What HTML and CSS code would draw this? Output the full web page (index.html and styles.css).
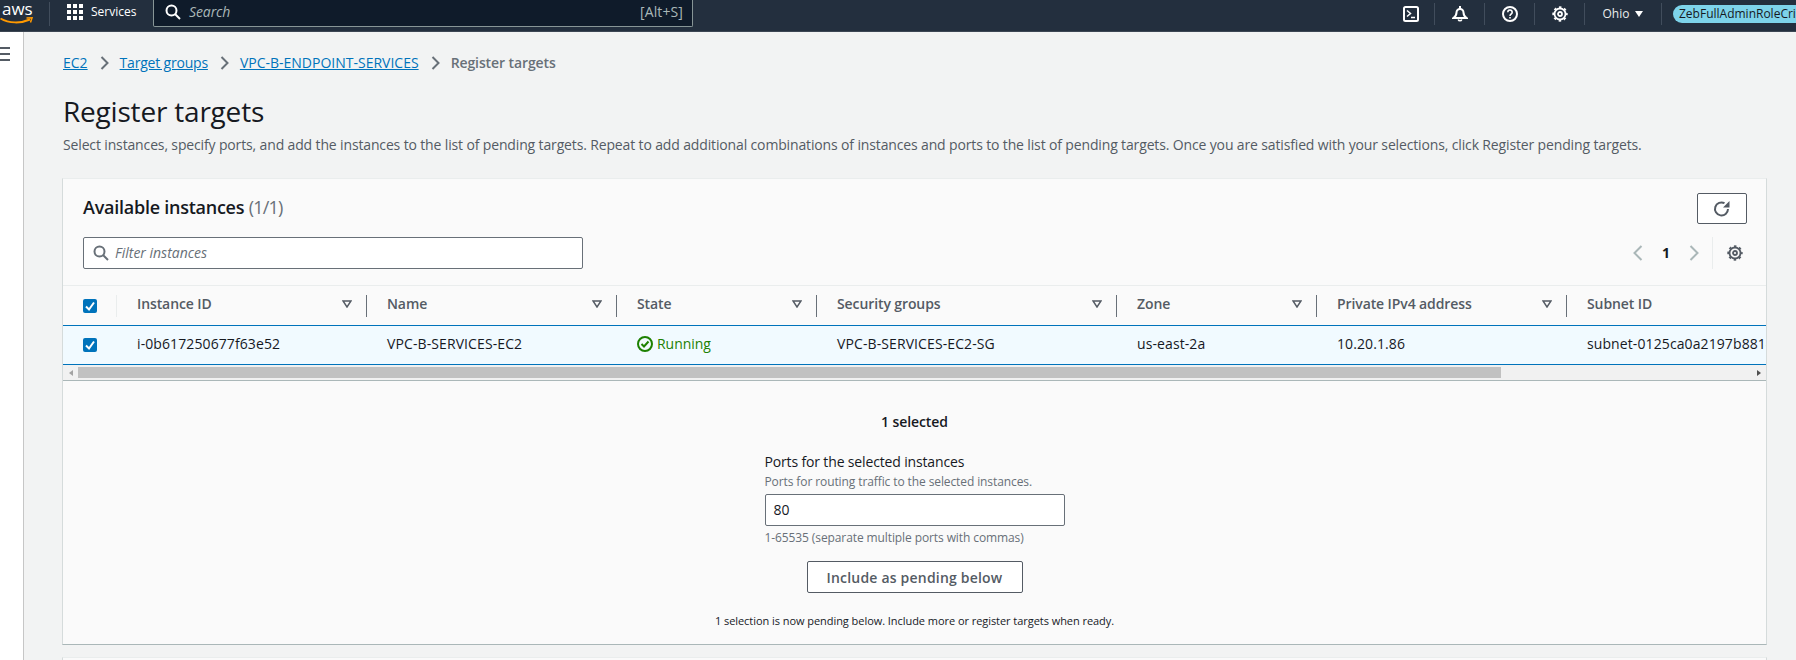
FILE: index.html
```html
<!DOCTYPE html>
<html lang="en">
<head>
    <meta charset="UTF-8">
    <title>Register targets</title>
    <link rel="stylesheet" href="styles.css">
</head>
<body>
    <header class="topnav">
        <div class="logo">
            <span class="logo-text">aws</span>
            <svg class="logo-smile" width="33" height="8" viewBox="0 0 33 8"><path d="M0.500 1.500C9 6.500 21 6.500 30 2.500" fill="none" stroke="#ff9900" stroke-width="2"/><path d="M26.500 1L32 0.800L30.500 5.500" fill="none" stroke="#ff9900" stroke-width="1.500"/></svg>
        </div>
        <div class="services">
            <svg width="16" height="16" viewBox="0 0 16 16" fill="#fff"><rect x="0" y="0" width="4" height="4"/><rect x="6" y="0" width="4" height="4"/><rect x="12" y="0" width="4" height="4"/><rect x="0" y="6" width="4" height="4"/><rect x="6" y="6" width="4" height="4"/><rect x="12" y="6" width="4" height="4"/><rect x="0" y="12" width="4" height="4"/><rect x="6" y="12" width="4" height="4"/><rect x="12" y="12" width="4" height="4"/></svg>
            <span>Services</span>
        </div>
        <div class="nav-search">
            <svg width="16" height="16" viewBox="0 0 16 16" fill="none" stroke="#fff" stroke-width="2"><circle cx="6.500" cy="6.500" r="5"/><path d="M10 10l5 5"/></svg>
            <span class="nav-search-text">Search</span>
            <span class="nav-search-key">[Alt+S]</span>
        </div>
        <div class="nav-right">
            <div class="nav-item nav-icon">
                <svg width="16" height="16" viewBox="0 0 16 16" fill="none" stroke="#fff" stroke-width="2"><rect x="1" y="1" width="14" height="14" rx="1.500"/><path d="M4 4.500L7.500 7.500L4 10.500M8 11.500h4" stroke-width="1.500"/></svg>
            </div>
            <div class="nav-item nav-icon">
                <svg width="16" height="16" viewBox="0 0 16 16" fill="none" stroke="#fff" stroke-width="2"><path d="M1.500 12c2-1.500 3-3 3-5.500a3.500 3.500 0 0 1 7 0c0 2.500 1 4 3 5.500z"/><path d="M8 0v3"/><path d="M6.200 13.500a1.900 1.900 0 0 0 3.600 0" stroke-width="1.600"/></svg>
            </div>
            <div class="nav-item nav-icon">
                <svg width="16" height="16" viewBox="0 0 16 16" fill="none" stroke="#fff" stroke-width="2"><circle cx="8" cy="8" r="7"/><path d="M5.800 6.200a2.200 2.200 0 1 1 3.400 1.800C8.400 8.500 8 9 8 10" stroke-width="1.600"/><path d="M8 11v1.500" stroke-width="1.600"/></svg>
            </div>
            <div class="nav-item nav-icon">
                <svg width="16" height="16" viewBox="0 0 16 16" fill="none" stroke="#fff" stroke-width="1.800"><circle cx="8" cy="8" r="5.500"/><circle cx="8" cy="8" r="6.800" stroke-dasharray="2.500 2.840" stroke-dashoffset="1.250"/><circle cx="8" cy="8" r="2"/></svg>
            </div>
            <div class="nav-item nav-region">
                <span>Ohio</span>
                <svg width="8" height="6" viewBox="0 0 8 6" fill="#fff"><path d="M0 0h8L4 6z"/></svg>
            </div>
            <div class="nav-role">
                <span class="role-pill">ZebFullAdminRoleCrissCrossApplesauce</span>
            </div>
        </div>
    </header>

    <div class="layout">
        <aside class="sidenav">
            <div class="burger"><i></i><i></i><i></i></div>
        </aside>
        <main class="content">
            <nav class="breadcrumbs">
                <a href="#">EC2</a>
                <svg class="crumb-arrow" width="10" height="16" viewBox="0 0 10 16"><path d="M1.500 2l6 6-6 6" fill="none" stroke="#687078" stroke-width="2"/></svg>
                <a href="#" class="crumb-tight">Target groups</a>
                <svg class="crumb-arrow" width="10" height="16" viewBox="0 0 10 16"><path d="M1.500 2l6 6-6 6" fill="none" stroke="#687078" stroke-width="2"/></svg>
                <a href="#">VPC-B-ENDPOINT-SERVICES</a>
                <svg class="crumb-arrow" width="10" height="16" viewBox="0 0 10 16"><path d="M1.500 2l6 6-6 6" fill="none" stroke="#687078" stroke-width="2"/></svg>
                <span class="crumb-current">Register targets</span>
            </nav>
            <h1>Register targets</h1>
            <p class="lead">Select instances, specify ports, and add the instances to the list of pending targets. Repeat to add additional combinations of instances and ports to the list of pending targets. Once you are satisfied with your selections, click Register pending targets.</p>

            <section class="card">
                <div class="card-head">
                    <div class="card-title-row">
                        <h2>Available instances <span class="count">(1/1)</span></h2>
                        <button class="btn-refresh" type="button">
                            <svg width="18" height="17" viewBox="0 0 18 17" fill="none" stroke="#545b64" stroke-width="2"><path d="M11.500 3.200A6.500 6.500 0 1 0 15 9"/><path d="M16.500 1v6.500H10z" fill="#545b64" stroke="none"/></svg>
                        </button>
                    </div>
                    <div class="tools-row">
                        <div class="filter">
                            <svg width="16" height="16" viewBox="0 0 16 16" fill="none" stroke="#687078" stroke-width="2"><circle cx="6.500" cy="6.500" r="5"/><path d="M10 10l5 5"/></svg>
                            <span>Filter instances</span>
                        </div>
                        <div class="pager">
                            <svg width="10" height="16" viewBox="0 0 10 16"><path d="M8.500 1l-7 7 7 7" fill="none" stroke="#aab7b8" stroke-width="2"/></svg>
                            <span class="page-num">1</span>
                            <svg width="10" height="16" viewBox="0 0 10 16"><path d="M1.500 1l7 7-7 7" fill="none" stroke="#aab7b8" stroke-width="2"/></svg>
                            <span class="pager-sep"></span>
                            <svg width="16" height="16" viewBox="0 0 16 16" fill="none" stroke="#545b64" stroke-width="1.800"><circle cx="8" cy="8" r="5.500"/><circle cx="8" cy="8" r="6.800" stroke-dasharray="2.500 2.840" stroke-dashoffset="1.250"/><circle cx="8" cy="8" r="2"/></svg>
                        </div>
                    </div>
                </div>

                <div class="table-wrap">
                    <div class="row row-head">
                        <div class="cell cell-check"><span class="check"><svg width="14" height="14" viewBox="0 0 14 14"><path d="M3 7.500l3 3 5-7" fill="none" stroke="#fff" stroke-width="2"/></svg></span></div>
                        <div class="cell cell-th">Instance ID<svg class="sort" width="10" height="8" viewBox="0 0 10 8"><path d="M1 1h8L5 7z" fill="none" stroke="#545b64" stroke-width="1.500"/></svg></div>
                        <div class="cell cell-th">Name<svg class="sort" width="10" height="8" viewBox="0 0 10 8"><path d="M1 1h8L5 7z" fill="none" stroke="#545b64" stroke-width="1.500"/></svg></div>
                        <div class="cell cell-th">State<svg class="sort" width="10" height="8" viewBox="0 0 10 8"><path d="M1 1h8L5 7z" fill="none" stroke="#545b64" stroke-width="1.500"/></svg></div>
                        <div class="cell cell-th">Security groups<svg class="sort" width="10" height="8" viewBox="0 0 10 8"><path d="M1 1h8L5 7z" fill="none" stroke="#545b64" stroke-width="1.500"/></svg></div>
                        <div class="cell cell-th">Zone<svg class="sort" width="10" height="8" viewBox="0 0 10 8"><path d="M1 1h8L5 7z" fill="none" stroke="#545b64" stroke-width="1.500"/></svg></div>
                        <div class="cell cell-th">Private IPv4 address<svg class="sort" width="10" height="8" viewBox="0 0 10 8"><path d="M1 1h8L5 7z" fill="none" stroke="#545b64" stroke-width="1.500"/></svg></div>
                        <div class="cell cell-th cell-last">Subnet ID</div>
                    </div>
                    <div class="row row-selected">
                        <div class="cell cell-check"><span class="check"><svg width="14" height="14" viewBox="0 0 14 14"><path d="M3 7.500l3 3 5-7" fill="none" stroke="#fff" stroke-width="2"/></svg></span></div>
                        <div class="cell">i-0b617250677f63e52</div>
                        <div class="cell">VPC-B-SERVICES-EC2</div>
                        <div class="cell cell-running">
                            <svg width="16" height="16" viewBox="0 0 16 16" fill="none" stroke="#1d8102" stroke-width="2"><circle cx="8" cy="8" r="7"/><path d="M4.500 8l2.500 2.500 4.500-5"/></svg>
                            Running
                        </div>
                        <div class="cell">VPC-B-SERVICES-EC2-SG</div>
                        <div class="cell">us-east-2a</div>
                        <div class="cell">10.20.1.86</div>
                        <div class="cell cell-last">subnet-0125ca0a2197b8814a</div>
                    </div>
                    <div class="hscroll">
                        <span class="hscroll-arrow hscroll-left"></span>
                        <div class="hscroll-track"><div class="hscroll-thumb"></div></div>
                        <span class="hscroll-arrow hscroll-right"></span>
                    </div>
                </div>

                <div class="ports">
                    <div class="selected-count">1 selected</div>
                    <div class="field">
                        <label>Ports for the selected instances</label>
                        <div class="field-desc">Ports for routing traffic to the selected instances.</div>
                        <div class="field-input">80</div>
                        <div class="field-hint">1-65535 (separate multiple ports with commas)</div>
                    </div>
                    <button class="btn-include" type="button">Include as pending below</button>
                    <div class="pending-note">1 selection is now pending below. Include more or register targets when ready.</div>
                </div>
            </section>

            <section class="card card-next"></section>
        </main>
    </div>
</body>
</html>
```

FILE: styles.css
```css
* {
    box-sizing: border-box;
}
html, body {
    height: 100%;
}
body {
    margin: 0;
    overflow: hidden;
    font-family: "Open Sans", "Noto Sans", sans-serif;
    font-size: 14px;
    line-height: 20px;
    color: #16191f;
    background-color: #f2f3f3;
}

/* top bar */
.topnav {
    display: flex;
    align-items: center;
    height: 32px;
    background-color: #232f3e;
    color: #fff;
    border-bottom: 1px solid #3c4653;
}
.logo {
    width: 50px;
    height: 24px;
    margin-bottom: 4px;
    border-right: 1px solid #414d5c;
    flex: none;
}
.logo-text {
    display: block;
    padding-left: 2px;
    font-size: 17px;
    line-height: 16px;
    margin-top: -1px;
}
.logo-smile {
    display: block;
}
.services {
    display: flex;
    align-items: center;
    gap: 8px;
    width: 103px;
    padding-left: 17px;
    font-size: 12px;
    flex: none;
    margin-bottom: 8px;
}
.nav-search {
    display: flex;
    align-items: center;
    width: 540px;
    height: 28px;
    margin-top: -6px;
    padding: 0 9px 0 11px;
    background-color: #0f1b2a;
    border: 1px solid #879596;
    border-top: none;
    border-radius: 0 0 2px 2px;
    flex: none;
}
.nav-search-text {
    margin-left: 8px;
    font-size: 14px;
    font-style: italic;
    color: #aab7b8;
    letter-spacing: -0.1px;
}
.nav-search-key {
    margin-left: auto;
    font-size: 14px;
    color: #aab7b8;
    letter-spacing: 0.1px;
}
.nav-right {
    display: flex;
    align-items: center;
    margin-left: auto;
    width: 393px;
    height: 24px;
    overflow: hidden;
    margin-bottom: 4px;
}
.nav-item {
    display: flex;
    align-items: center;
    justify-content: center;
    height: 22px;
    border-right: 1px solid #414d5c;
    flex: none;
}
.nav-icon {
    width: 50px;
}
.nav-icon:first-child {
    width: 32px;
    justify-content: flex-start;
}
.nav-region {
    gap: 6px;
    width: 77px;
    font-size: 12px;
    color: #eaeded;
}
.nav-role {
    padding-left: 11px;
    flex: none;
}
.role-pill {
    display: block;
    height: 18px;
    padding: 0 6px;
    border-radius: 9px;
    background-color: #7dd3ea;
    color: #16191f;
    font-size: 12px;
    line-height: 18px;
    white-space: nowrap;
}

/* page */
.layout {
    display: flex;
    height: 628px;
}
.sidenav {
    width: 24px;
    flex: none;
    background-color: #fff;
    border-right: 1px solid #c6c6c6;
    padding-top: 15px;
}
.burger {
    display: flex;
    flex-direction: column;
    gap: 4px;
    width: 10px;
}
.burger i {
    display: block;
    height: 2px;
    background-color: #545b64;
}
.content {
    flex: 1;
    min-width: 0;
    padding: 21px 29px 0 38px;
}
.breadcrumbs {
    display: flex;
    align-items: center;
    height: 20px;
    padding-left: 1px;
    font-size: 14px;
}
.breadcrumbs a {
    color: #0073bb;
}
.breadcrumbs .crumb-tight {
    letter-spacing: -0.2px;
}
.crumb-arrow {
    margin: 0 10px 0 12px;
}
.crumb-current {
    font-weight: 600;
    color: #687078;
    letter-spacing: -0.1px;
}
h1 {
    margin: 20px 0 0 1px;
    font-size: 28px;
    line-height: 36px;
    font-weight: 400;
    letter-spacing: -0.2px;
}
.lead {
    margin: 6px 0 0 1px;
    font-size: 14px;
    line-height: 20px;
    color: #545b64;
    white-space: nowrap;
    letter-spacing: -0.142px;
}

/* card */
.card {
    margin-top: 23px;
    background-color: #fafafa;
    border-left: 1px solid #d5dbdb;
    border-right: 1px solid #d5dbdb;
    border-bottom: 1px solid #aab7b8;
    border-top: 1px solid #eaeded;
}
.card-next {
    margin-top: 12px;
    height: 3px;
    border-bottom: none;
}
.card-head {
    height: 107px;
    padding: 14px 19px 0 20px;
    border-bottom: 1px solid #eaeded;
}
.card-title-row {
    display: flex;
    align-items: center;
    justify-content: space-between;
    height: 31px;
}
h2 {
    margin: -4px 0 0;
    font-size: 18px;
    line-height: 24px;
    font-weight: 600;
    letter-spacing: -0.25px;
}
.count {
    font-weight: 400;
    color: #687078;
    letter-spacing: -0.8px;
}
.btn-refresh {
    display: flex;
    align-items: center;
    justify-content: center;
    width: 50px;
    height: 31px;
    padding: 0;
    background-color: #fff;
    border: 1px solid #545b64;
    border-radius: 2px;
}
.tools-row {
    display: flex;
    align-items: center;
    justify-content: space-between;
    margin-top: 13px;
}
.filter {
    display: flex;
    align-items: center;
    gap: 6px;
    width: 500px;
    height: 32px;
    padding-left: 9px;
    background-color: #fff;
    border: 1px solid #687078;
    border-radius: 2px;
    font-size: 14px;
    font-style: italic;
    color: #687078;
}
.pager {
    display: flex;
    align-items: center;
    height: 32px;
    padding-right: 4px;
}
.page-num {
    margin: 0 19px 0 19px;
    font-weight: 700;
}
.pager-sep {
    width: 1px;
    height: 32px;
    margin: 0 14px 0 13px;
    background-color: #eaeded;
}

/* instances table */
.table-wrap {
    overflow: hidden;
    border-bottom: 1px solid #aab7b8;
}
.row {
    display: grid;
    grid-template-columns: 54px 250px 250px 200px 300px 200px 250px 250px;
    align-items: center;
}
.row-head {
    height: 39px;
}
.row-selected {
    height: 40px;
    background-color: #f1faff;
    border-top: 1px solid #0073bb;
    border-bottom: 1px solid #0073bb;
}
.cell {
    display: flex;
    align-items: center;
    padding-left: 20px;
    padding-bottom: 2px;
    white-space: nowrap;
    color: #16191f;
    letter-spacing: 0.1px;
}
.cell-check {
    padding-left: 20px;
    padding-bottom: 0;
    height: 22px;
}
.row-head .cell-check {
    border-right: 1px solid #eaeded;
}
.cell-th {
    height: 22px;
    padding-right: 14px;
    padding-bottom: 3px;
    justify-content: space-between;
    font-weight: 600;
    color: #545b64;
    border-right: 1px solid #687078;
    letter-spacing: -0.1px;
}
.cell-last {
    border-right: none;
}
.sort {
    flex: none;
}
.check {
    display: flex;
    width: 14px;
    height: 14px;
    border-radius: 2px;
    background-color: #0073bb;
}
.cell-running {
    gap: 4px;
    color: #1d8102;
    letter-spacing: -0.03px;
}
.hscroll {
    display: flex;
    align-items: center;
    height: 15px;
    background-color: #f1f1f1;
}
.hscroll-arrow {
    flex: none;
    width: 15px;
    height: 15px;
    display: flex;
    align-items: center;
    justify-content: center;
}
.hscroll-arrow::before {
    content: "";
    border-top: 3.500px solid transparent;
    border-bottom: 3.500px solid transparent;
}
.hscroll-left::before {
    border-right: 4px solid #a3a3a3;
}
.hscroll-right::before {
    border-left: 4px solid #505050;
}
.hscroll-track {
    flex: 1;
    height: 11px;
}
.hscroll-thumb {
    width: 1423px;
    height: 11px;
    background-color: #c1c1c1;
}

/* ports form */
.ports {
    display: flex;
    flex-direction: column;
    align-items: center;
    height: 263px;
    padding-top: 31px;
}
.selected-count {
    font-size: 14px;
    line-height: 20px;
    font-weight: 600;
    letter-spacing: -0.1px;
}
.field {
    width: 300px;
    margin-top: 20px;
}
.field label {
    display: block;
    font-size: 14px;
    line-height: 20px;
    letter-spacing: -0.15px;
}
.field-desc, .field-hint {
    font-size: 12px;
    line-height: 16px;
    color: #687078;
    letter-spacing: -0.1px;
}
.field-desc {
    margin-top: 2px;
}
.field-input {
    height: 32px;
    margin-top: 4px;
    padding-left: 8px;
    line-height: 30px;
    background-color: #fff;
    border: 1px solid #687078;
    border-radius: 2px;
}
.field-hint {
    margin-top: 4px;
}
.btn-include {
    width: 216px;
    height: 32px;
    margin-top: 15px;
    padding: 0;
    background-color: #fff;
    border: 1px solid #545b64;
    border-radius: 2px;
    font-family: inherit;
    font-size: 14px;
    font-weight: 600;
    color: #545b64;
    letter-spacing: 0.2px;
}
.pending-note {
    margin-top: 18px;
    font-size: 11px;
    line-height: 20px;
    letter-spacing: -0.05px;
}
```
